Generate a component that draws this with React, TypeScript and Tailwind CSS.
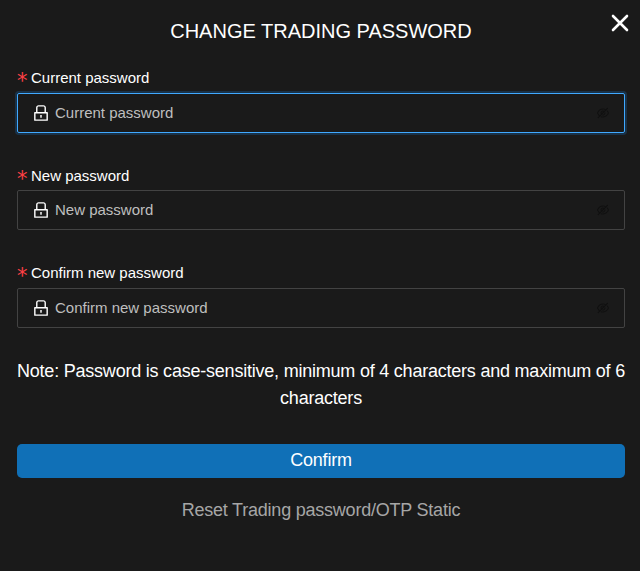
import React from "react";
import { AiOutlineEyeInvisible, AiOutlineLock } from "react-icons/ai";

type FieldProps = { label: string; focused?: boolean };

function Field({ label, focused = false }: FieldProps) {
  return (
    <label className="block h-[97.4px]">
      <span className="flex h-[30px] items-center pt-[0.4px] text-[15px] leading-[30px] text-white">
        <span className="w-[14px] font-['DejaVu_Sans',sans-serif] text-[21px] text-[#ff4045]">
          <span className="relative top-[3px]">*</span>
        </span>
        <span>{label}</span>
      </span>
      <span
        className={
          focused
            ? "flex h-10 items-center rounded-[2px] border border-[#40a9ff] pr-[14px] pl-[13px] shadow-[0_0_0_2px_rgba(24,144,255,0.2)]"
            : "flex h-10 items-center rounded-[2px] border border-[#434343] pr-[14px] pl-[13px]"
        }
      >
        <AiOutlineLock className="size-5 shrink-0 text-white" />
        <input
          type="password"
          placeholder={label}
          className="ml-1 h-[30px] min-w-0 flex-1 bg-transparent pb-[1.2px] text-[15px] text-white outline-none placeholder:text-[#bfbfbf]"
        />
        <AiOutlineEyeInvisible className="size-[14px] shrink-0 text-[#101010]" />
      </span>
    </label>
  );
}

export default function App() {
  return (
    <main className="relative h-[571px] w-full bg-[#1a1a1a] px-[17px] pr-[15px] font-['Liberation_Sans',Arial,sans-serif]">
      <button className="absolute top-[14px] right-[11px] size-[18px]" aria-label="Close">
        <svg viewBox="0 0 18 18" className="size-[18px]" fill="none" stroke="white" strokeWidth="2.6" strokeLinecap="round">
          <path d="M2 2L16 16M16 2L2 16" />
        </svg>
      </button>
      <h1 className="pt-4 text-center text-[20px] leading-[30px] text-white">CHANGE TRADING PASSWORD</h1>
      <form className="pt-[17px]">
        <Field label="Current password" focused />
        <Field label="New password" />
        <Field label="Confirm new password" />
        <p className="pt-[2.8px] text-center text-[18px] leading-[27px] tracking-[-0.22px] text-white">
          Note: Password is case-sensitive, minimum of 4 characters and maximum of 6 characters
        </p>
        <button type="button" className="mt-8 block h-[34px] w-full rounded-[5px] bg-[#1070b7] pb-[2px] text-[18px] leading-[32px] tracking-[-0.22px] text-white">
          Confirm
        </button>
      </form>
      <p className="pt-[19px] text-center text-[18px] leading-[27px] tracking-[-0.22px] text-[#a6a6a6]">Reset Trading password/OTP Static</p>
    </main>
  );
}
